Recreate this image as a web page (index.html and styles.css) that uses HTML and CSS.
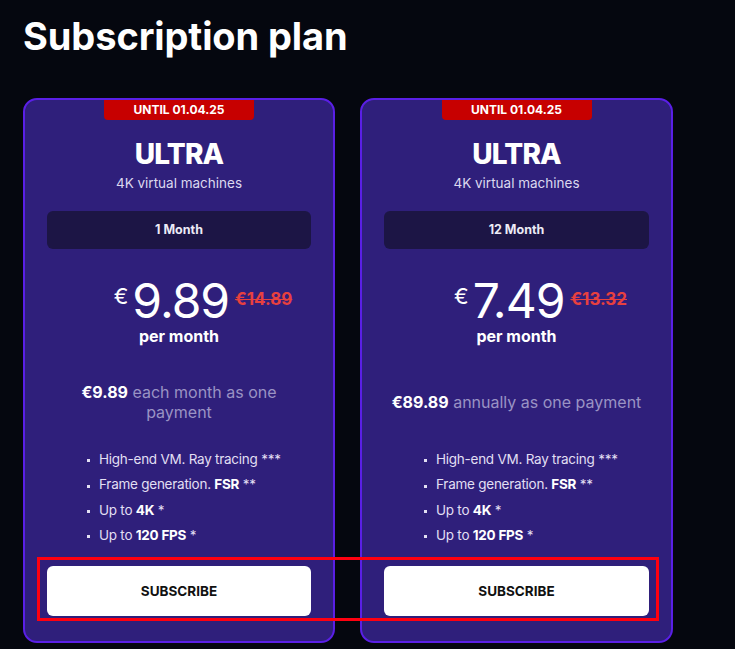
FILE: index.html
```html
<!DOCTYPE html>
<html lang="en">
<head>
<meta charset="utf-8">
<title>Subscription plan</title>
<link rel="stylesheet" href="styles.css">
</head>
<body>
<main class="page">
  <h1 class="title">Subscription plan</h1>
  <div class="plans">
    <section class="card">
      <div class="badge">UNTIL 01.04.25</div>
      <h2 class="plan-name">ULTRA</h2>
      <p class="plan-sub">4K virtual machines</p>
      <div class="period">1 Month</div>
      <div class="price-row">
        <span class="cur">€</span>
        <span class="amount">9.89</span>
        <span class="old">€14.89</span>
      </div>
      <p class="per">per month</p>
      <div class="payment"><p><b>€9.89</b> each month as one payment</p></div>
      <ul class="features">
        <li>High-end VM. Ray tracing ***</li>
        <li>Frame generation. <b>FSR</b> **</li>
        <li>Up to <b>4K</b> *</li>
        <li>Up to <b>120 FPS</b> *</li>
      </ul>
      <button class="subscribe">SUBSCRIBE</button>
    </section>
    <section class="card">
      <div class="badge">UNTIL 01.04.25</div>
      <h2 class="plan-name">ULTRA</h2>
      <p class="plan-sub">4K virtual machines</p>
      <div class="period">12 Month</div>
      <div class="price-row">
        <span class="cur">€</span>
        <span class="amount">7.49</span>
        <span class="old">€13.32</span>
      </div>
      <p class="per">per month</p>
      <div class="payment"><p><b>€89.89</b> annually as one payment</p></div>
      <ul class="features">
        <li>High-end VM. Ray tracing ***</li>
        <li>Frame generation. <b>FSR</b> **</li>
        <li>Up to <b>4K</b> *</li>
        <li>Up to <b>120 FPS</b> *</li>
      </ul>
      <button class="subscribe">SUBSCRIBE</button>
    </section>
    <div class="highlight"></div>
  </div>
</main>
</body>
</html>
```

FILE: styles.css
```css
* { box-sizing: border-box; }
html, body {
  margin: 0;
  padding: 0;
  background: #05070f;
}
body {
  font-family: Inter, "Noto Sans", sans-serif;
  color: #ffffff;
  width: 735px;
  height: 649px;
  overflow: hidden;
}
.page {
  padding: 14px 0 0 23px;
}
.title {
  margin: 0;
  font-size: 38px;
  line-height: 44px;
  font-weight: 700;
  letter-spacing: -0.1px;
}
.plans {
  position: relative;
  display: flex;
  gap: 25px;
  margin-top: 40px;
}
.card {
  width: 312px;
  border: 2px solid #5a1fe6;
  border-radius: 14px;
  background: #2f1f7b;
  padding: 0 22px 25px;
  display: flex;
  flex-direction: column;
}
.card + .card { width: 313px; }
.badge {
  align-self: center;
  width: 150px;
  height: 20px;
  background: #c70000;
  border-radius: 0 0 4px 4px;
  font-size: 12px;
  line-height: 20px;
  font-weight: 700;
  text-align: center;
}
.plan-name {
  margin: 16px 0 0;
  font-size: 28px;
  line-height: 36px;
  font-weight: 800;
  letter-spacing: -0.8px;
  text-align: center;
}
.plan-sub {
  margin: 2px 0 0;
  font-size: 13.5px;
  line-height: 18px;
  color: #dcd8ef;
  text-align: center;
}
.period {
  margin-top: 19px;
  height: 38px;
  border-radius: 6px;
  background: #1c1545;
  font-size: 12.5px;
  font-weight: 700;
  line-height: 38px;
  text-align: center;
  color: #ecebf6;
}
.price-row {
  margin-top: 32px;
  display: flex;
  justify-content: center;
  align-items: flex-start;
  padding-left: 48px;
  height: 40px;
}
.cur {
  font-size: 22px;
  line-height: 22px;
  margin-top: 4px;
  margin-right: 4px;
  font-weight: 400;
}
.amount {
  font-size: 48px;
  line-height: 40px;
  font-weight: 400;
  letter-spacing: -1px;
}
.old {
  margin-left: 6px;
  margin-top: 10px;
  font-size: 17px;
  line-height: 17px;
  font-weight: 700;
  color: #e8403f;
  text-decoration: line-through;
}
.per {
  margin: 5px 0 0;
  font-size: 16px;
  line-height: 20px;
  font-weight: 700;
  text-align: center;
}
.payment {
  margin-top: 28px;
  height: 56px;
  display: flex;
  align-items: center;
  justify-content: center;
}
.payment p {
  margin: 0;
  font-size: 16px;
  line-height: 20px;
  text-align: center;
  color: #9a93c4;
}
.payment b {
  color: #ffffff;
  font-weight: 700;
}
.features {
  list-style: none;
  margin: 17px 0 0 40px;
  padding: 0;
  font-size: 13.5px;
  line-height: 25.4px;
  letter-spacing: -0.25px;
  color: #e2dff3;
}
.features li {
  display: flex;
  align-items: center;
  white-space: pre;
}
.features li::before {
  content: "";
  width: 3px;
  height: 3px;
  background: #e2dff3;
  margin-right: 9px;
  margin-top: 2px;
  flex: none;
}
.features b { font-weight: 700; color: #ffffff; }
.subscribe {
  margin-top: 17px;
  height: 50px;
  border: 0;
  border-radius: 6px;
  background: #ffffff;
  color: #111111;
  font-family: Inter, "Noto Sans", sans-serif;
  font-size: 13.5px;
  font-weight: 700;
  padding: 0;
}
.highlight {
  position: absolute;
  left: 14px;
  top: 459px;
  width: 622px;
  height: 64px;
  border: 3px solid #ff0010;
  pointer-events: none;
}
```
